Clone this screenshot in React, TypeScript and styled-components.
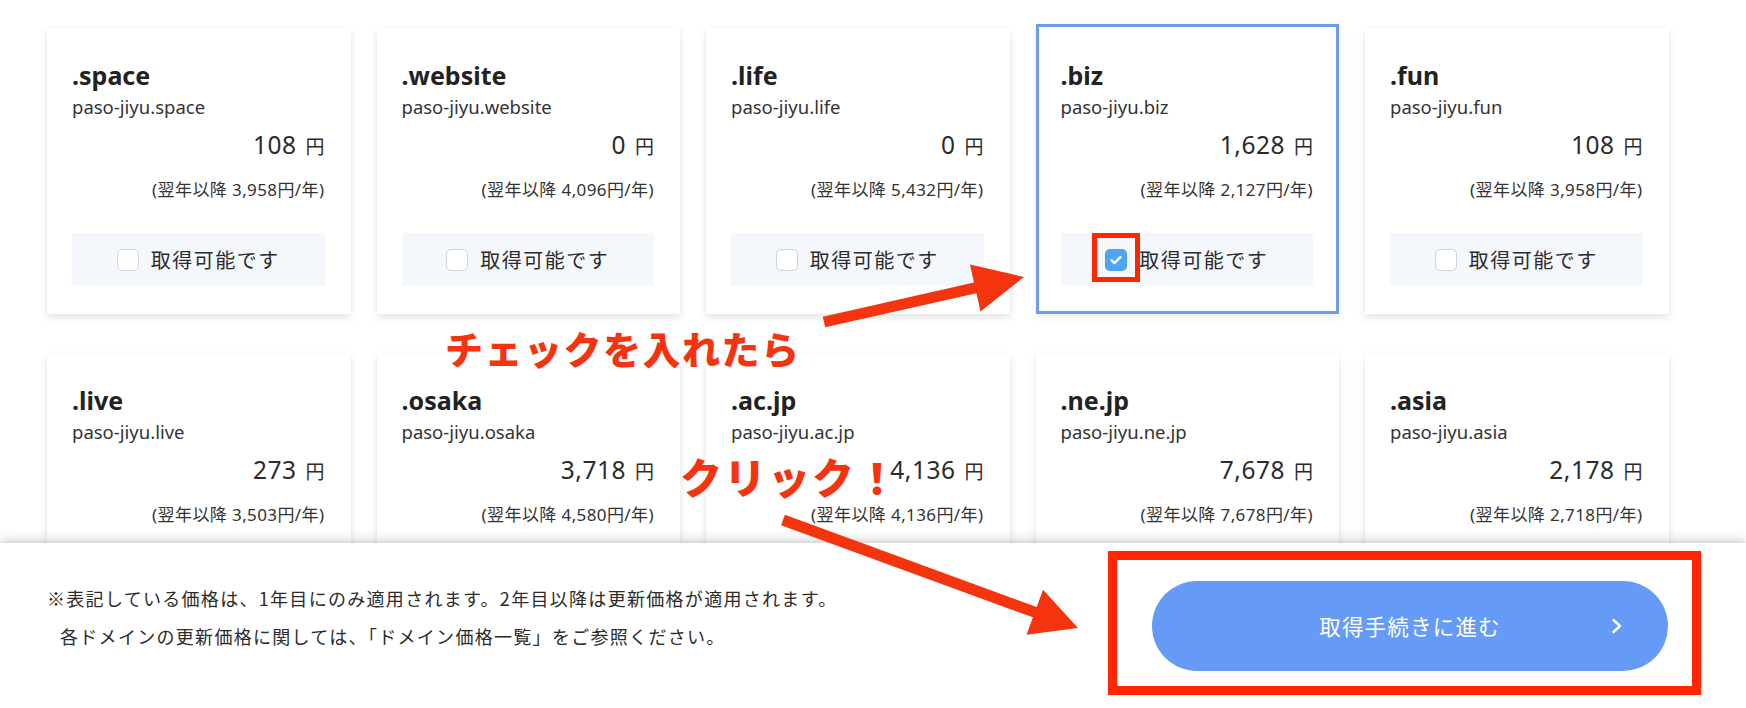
import React from 'react'
import styled, { createGlobalStyle } from 'styled-components'

const GlobalStyle = createGlobalStyle`
	html, body {
		margin: 0;
		padding: 0;
		background: #fff;
		overflow: hidden;
	}
	body {
		font-family: "Noto Sans", "Noto Sans CJK JP", sans-serif;
		color: #2b2b2b;
	}
`

type Domain = {
	tld: string
	price: string
	renew: string
	checked?: boolean
}

const domains: Domain[] = [
	{ tld: '.space', price: '108', renew: '3,958' },
	{ tld: '.website', price: '0', renew: '4,096' },
	{ tld: '.life', price: '0', renew: '5,432' },
	{ tld: '.biz', price: '1,628', renew: '2,127', checked: true },
	{ tld: '.fun', price: '108', renew: '3,958' },
	{ tld: '.live', price: '273', renew: '3,503' },
	{ tld: '.osaka', price: '3,718', renew: '4,580' },
	{ tld: '.ac.jp', price: '4,136', renew: '4,136' },
	{ tld: '.ne.jp', price: '7,678', renew: '7,678' },
	{ tld: '.asia', price: '2,178', renew: '2,718' },
]

const Page = styled.div`
	position: relative;
	height: 708px;
	width: 1746px;
	display: flex;
	flex-direction: column;
	overflow: hidden;
`

const Scroller = styled.div`
	flex: 1;
	overflow: hidden;
	padding: 28px 0 0 47px;
`

const Grid = styled.div`
	display: grid;
	grid-template-columns: repeat(5, 303.5px);
	column-gap: 26px;
	row-gap: 39px;
`

// selected card grows a little upward, content stays on the same line
const Card = styled.div<{ $selected?: boolean }>`
	background: #fff;
	padding: ${(p) => (p.$selected ? '35px' : '31px')} 26px 28px 25px;
	margin-top: ${(p) => (p.$selected ? '-4px' : '0')};
	box-shadow: ${(p) => (p.$selected
		? 'inset 0 0 0 3px #6c9de8, 0 3px 8px rgba(0, 0, 0, 0.08)'
		: '0 4px 8px rgba(0, 0, 0, 0.10), 0 0 4px rgba(0, 0, 0, 0.03)')};
	display: flex;
	flex-direction: column;
`

const Tld = styled.div`
	font-size: 25px;
	line-height: 32px;
	font-weight: 700;
	color: #222;
`

const FullName = styled.div`
	margin-top: 4px;
	font-size: 18.5px;
	line-height: 24px;
	color: #333;
`

const Price = styled.div`
	margin-top: 11px;
	display: flex;
	justify-content: flex-end;
	align-items: baseline;
	line-height: 30px;
	color: #2b2b2b;
`

const Amount = styled.span`
	font-size: 24.5px;
	letter-spacing: 0.5px;
`

const Yen = styled.span`
	margin-left: 9px;
	font-family: "Noto Sans CJK JP", sans-serif;
	font-size: 19px;
`

const Renewal = styled.div`
	margin-top: 18px;
	text-align: right;
	font-size: 17px;
	line-height: 22px;
	letter-spacing: 0.4px;
	color: #333;
`

const PickBar = styled.label`
	margin-top: 32px;
	height: 53px;
	background: #f4f7fb;
	display: flex;
	align-items: center;
	justify-content: center;
	gap: 12px;
	font-family: "Noto Sans CJK JP", sans-serif;
	font-size: 20px;
	letter-spacing: 1.5px;
	color: #2b2b2b;
`

const Box = styled.span<{ $checked?: boolean }>`
	width: 22px;
	height: 22px;
	box-sizing: border-box;
	border-radius: 5px;
	border: ${(p) => (p.$checked ? 'none' : '1.5px solid #cfd3d8')};
	background: ${(p) => (p.$checked ? '#4ea4f6' : '#fff')};
	display: flex;
	align-items: center;
	justify-content: center;
`

const Footer = styled.footer`
	position: relative;
	z-index: 1;
	height: 165px;
	flex-shrink: 0;
	background: #fff;
	box-shadow: 0 -2px 4px rgba(0, 0, 0, 0.08), 0 -4px 12px rgba(0, 0, 0, 0.12);
	display: flex;
	align-items: center;
	padding: 0 78px 0 47px;
`

const Notes = styled.div`
	font-family: "Noto Sans CJK JP", sans-serif;
	font-size: 18px;
	line-height: 38px;
	letter-spacing: 1.3px;
	color: #2b2b2b;
	margin-top: -17px;
`

const NoteLine = styled.p<{ $indent?: boolean }>`
	margin: 0;
	padding-left: ${(p) => (p.$indent ? '13px' : '0')};
`

const NextButton = styled.button`
	margin-left: auto;
	width: 516px;
	height: 90px;
	border: none;
	border-radius: 45px;
	background: #669af7;
	color: #fff;
	font-family: "Noto Sans CJK JP", sans-serif;
	font-size: 21.5px;
	letter-spacing: 1.2px;
	position: relative;
	display: flex;
	align-items: center;
	justify-content: center;
	cursor: pointer;
`

const Chevron = styled.svg`
	position: absolute;
	right: 45px;
	top: 50%;
	margin-top: -8px;
`

/* red hand-drawn notes laid over the page */
const Overlay = styled.div`
	position: absolute;
	inset: 0;
	z-index: 2;
	pointer-events: none;
`

const Callout = styled.span<{ $x: number; $y: number; $size: number; $spacing: number }>`
	position: absolute;
	left: ${(p) => p.$x}px;
	top: ${(p) => p.$y}px;
	font-family: "Noto Sans CJK JP", sans-serif;
	font-weight: 900;
	font-size: ${(p) => p.$size}px;
	line-height: 1;
	letter-spacing: ${(p) => p.$spacing}px;
	color: #f4340f;
	white-space: nowrap;
`

const Frame = styled.div<{ $x: number; $y: number; $w: number; $h: number; $t: number }>`
	position: absolute;
	left: ${(p) => p.$x}px;
	top: ${(p) => p.$y}px;
	width: ${(p) => p.$w}px;
	height: ${(p) => p.$h}px;
	border: ${(p) => p.$t}px solid #ff2600;
	box-sizing: border-box;
`

const Marks = styled.svg`
	position: absolute;
	left: 0;
	top: 0;
`

type ArrowProps = { from: [number, number]; to: [number, number]; head?: number; wing?: number; shaft?: number }

const Arrow = ({ from, to, head = 48, wing = 24, shaft = 5.5 }: ArrowProps) => {
	const dx = to[0] - from[0]
	const dy = to[1] - from[1]
	const len = Math.hypot(dx, dy)
	const ux = dx / len
	const uy = dy / len
	const nx = -uy
	const ny = ux
	const bx = to[0] - ux * head
	const by = to[1] - uy * head
	const pts = [
		[from[0] + nx * shaft, from[1] + ny * shaft],
		[bx + nx * shaft, by + ny * shaft],
		[bx + nx * wing, by + ny * wing],
		[to[0], to[1]],
		[bx - nx * wing, by - ny * wing],
		[bx - nx * shaft, by - ny * shaft],
		[from[0] - nx * shaft, from[1] - ny * shaft],
	]
	return <polygon points={pts.map((p) => p.join(',')).join(' ')} fill="#f4340f" />
}

const DomainCard = ({ d }: { d: Domain }) => (
	<Card $selected={d.checked}>
		<Tld>{d.tld}</Tld>
		<FullName>paso-jiyu{d.tld}</FullName>
		<Price>
			<Amount>{d.price}</Amount>
			<Yen>円</Yen>
		</Price>
		<Renewal>(翌年以降 {d.renew}円/年)</Renewal>
		<PickBar>
			<Box $checked={d.checked}>
				{d.checked && (
					<svg width="14" height="14" viewBox="0 0 14 14">
						<path d="M2.5 7.2l3 3 6-6.2" fill="none" stroke="#fff" strokeWidth="2.4" strokeLinecap="round" strokeLinejoin="round" />
					</svg>
				)}
			</Box>
			取得可能です
		</PickBar>
	</Card>
)

const App = () => {
	return (
		<>
			<GlobalStyle />
			<Page>
				<Scroller>
					<Grid>
						{domains.map((d) => (
							<DomainCard key={d.tld} d={d} />
						))}
					</Grid>
				</Scroller>

				<Footer>
					<Notes>
						<NoteLine>※表記している価格は、1年目にのみ適用されます。2年目以降は更新価格が適用されます。</NoteLine>
						<NoteLine $indent>各ドメインの更新価格に関しては、「ドメイン価格一覧」をご参照ください。</NoteLine>
					</Notes>
					<NextButton>
						取得手続きに進む
						<Chevron width="12" height="16" viewBox="0 0 12 16">
							<path d="M2.5 2l6.5 6-6.5 6" fill="none" stroke="#fff" strokeWidth="2.4" strokeLinecap="round" strokeLinejoin="round" />
						</Chevron>
					</NextButton>
				</Footer>

				<Overlay>
					<Marks width="1746" height="708">
						<Arrow from={[824, 322]} to={[1024, 277]} head={50} />
						<Arrow from={[783, 520]} to={[1078, 628]} head={46} />
					</Marks>
					<Frame $x={1092} $y={233} $w={48} $h={49} $t={5} />
					<Frame $x={1108} $y={551} $w={593} $h={144} $t={9} />
					<Callout $x={445} $y={329} $size={38} $spacing={1.5}>チェックを入れたら</Callout>
					<Callout $x={680} $y={455} $size={42} $spacing={2}>クリック！</Callout>
				</Overlay>
			</Page>
		</>
	)
}

export default App
